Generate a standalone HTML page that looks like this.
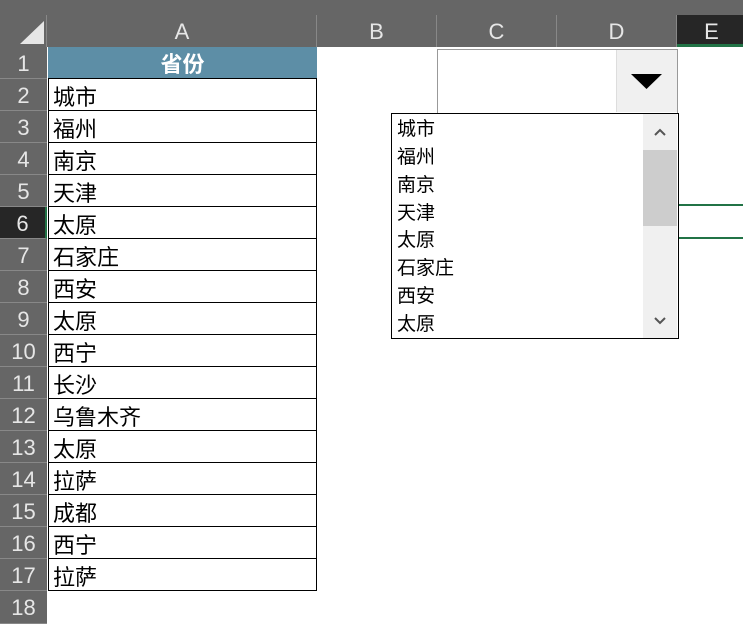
<!DOCTYPE html>
<html><head><meta charset="utf-8"><style>
body{margin:0;width:743px;height:624px;overflow:hidden;background:#fff;font-family:"Liberation Sans","Noto Sans CJK SC",sans-serif;position:relative}
div{position:absolute;box-sizing:border-box}
.ch{top:15px;height:32px;background:#666;color:#e6e6e6;font-size:22px;text-align:center;line-height:34px;border-right:1px solid #888}
.rh{left:0;width:47px;height:32px;background:#666;color:#e6e6e6;font-size:22px;text-align:center;line-height:34px;border-bottom:1px solid #888}
.c{left:48px;width:269px;height:33px;border:1px solid #000;font-size:22px;line-height:38px;padding-left:4px;color:#000}
.li{left:397px;font-size:19px;line-height:28px;color:#000}
</style></head><body>
<div style="left:0;top:0;width:743px;height:47px;background:#666"></div>
<div style="left:0;top:15px;width:47px;height:32px;border-right:1px solid #888"></div>
<svg style="position:absolute;left:18px;top:19px" width="28" height="26"><polygon points="26,2 26,25 2,25" fill="#e6e6e6"/></svg>
<div class="ch" style="left:48px;width:269px">A</div>
<div class="ch" style="left:317px;width:120px">B</div>
<div class="ch" style="left:437px;width:120px">C</div>
<div class="ch" style="left:557px;width:120px">D</div>
<div class="ch" style="left:677px;width:70px;background:#262626;border-bottom:3px solid #217346;line-height:34px">E</div>
<div class="c" style="top:47px;height:32px;background:#5d8ea6;color:#fff;font-weight:bold;text-align:center;padding:0;line-height:36px;border:none">省份</div>
<div class="rh" style="top:47px">1</div>
<div class="rh" style="top:79px">2</div><div class="c" style="top:78px">城市</div>
<div class="rh" style="top:111px">3</div><div class="c" style="top:110px">福州</div>
<div class="rh" style="top:143px">4</div><div class="c" style="top:142px">南京</div>
<div class="rh" style="top:175px">5</div><div class="c" style="top:174px">天津</div>
<div class="rh" style="top:207px;background:#262626;border-right:2px solid #217346">6</div><div class="c" style="top:206px">太原</div>
<div class="rh" style="top:239px">7</div><div class="c" style="top:238px">石家庄</div>
<div class="rh" style="top:271px">8</div><div class="c" style="top:270px">西安</div>
<div class="rh" style="top:303px">9</div><div class="c" style="top:302px">太原</div>
<div class="rh" style="top:335px">10</div><div class="c" style="top:334px">西宁</div>
<div class="rh" style="top:367px">11</div><div class="c" style="top:366px">长沙</div>
<div class="rh" style="top:399px">12</div><div class="c" style="top:398px">乌鲁木齐</div>
<div class="rh" style="top:431px">13</div><div class="c" style="top:430px">太原</div>
<div class="rh" style="top:463px">14</div><div class="c" style="top:462px">拉萨</div>
<div class="rh" style="top:495px">15</div><div class="c" style="top:494px">成都</div>
<div class="rh" style="top:527px">16</div><div class="c" style="top:526px">西宁</div>
<div class="rh" style="top:559px">17</div><div class="c" style="top:558px">拉萨</div>
<div class="rh" style="top:591px;height:33px">18</div>
<div style="left:678px;top:204px;width:65px;height:2px;background:#217346"></div>
<div style="left:678px;top:237px;width:65px;height:2px;background:#217346"></div>
<div style="left:437px;top:49px;width:241px;height:64px;border:1px solid #999;border-bottom:none;background:#fff"></div>
<div style="left:616px;top:50px;width:61px;height:62px;background:#f0f0f0;border-left:1px solid #ddd"></div>
<svg style="position:absolute;left:631px;top:74px" width="32" height="16"><polygon points="0,0 31,0 15.5,15" fill="#000"/></svg>
<div style="left:391px;top:113px;width:288px;height:226px;border:1px solid #000;background:#fff"></div>
<div style="left:643px;top:114px;width:34px;height:224px;background:#f0f0f0"></div>
<div style="left:643px;top:150px;width:34px;height:76px;background:#cdcdcd"></div>
<svg style="position:absolute;left:653px;top:127px" width="14" height="10"><path d="M2,8 L7,3 L12,8" stroke="#555" stroke-width="2" fill="none"/></svg>
<svg style="position:absolute;left:653px;top:316px" width="14" height="10"><path d="M2,2 L7,7 L12,2" stroke="#555" stroke-width="2" fill="none"/></svg>
<div class="li" style="top:116px">城市</div>
<div class="li" style="top:144px">福州</div>
<div class="li" style="top:172px">南京</div>
<div class="li" style="top:200px">天津</div>
<div class="li" style="top:227px">太原</div>
<div class="li" style="top:255px">石家庄</div>
<div class="li" style="top:283px">西安</div>
<div class="li" style="top:311px">太原</div>
</body></html>
